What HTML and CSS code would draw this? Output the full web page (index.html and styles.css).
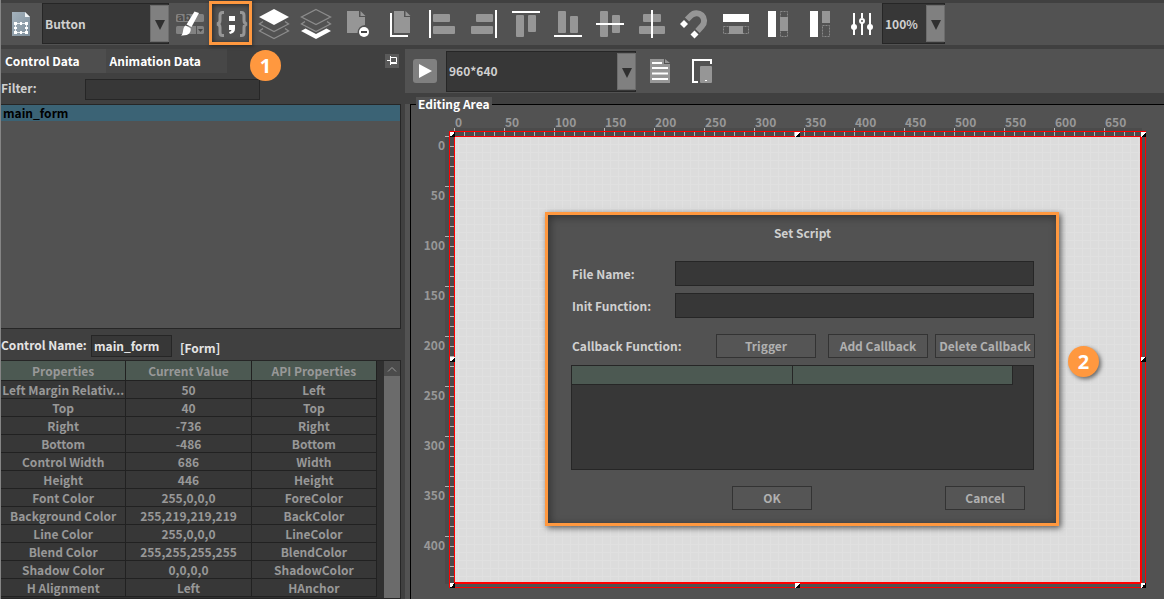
FILE: index.html
```html
<!DOCTYPE html>
<html lang="en">
<head>
<meta charset="utf-8">
<title>Form Designer</title>
<link rel="stylesheet" href="styles.css">
</head>
<body>
<div class="app">
  <header class="toolbar">
    <button class="tool" aria-label="New form"><svg viewBox="0 0 42 42"><defs><linearGradient id="pg" x1="0" y1="0" x2="1" y2="1"><stop offset="0" stop-color="#a4b2bc"/><stop offset="1" stop-color="#7d8e9b"/></linearGradient></defs><path d="M11 9h13l5 5v19H11z" fill="url(#pg)"/><path d="M24 9v5h5z" fill="#f2f5f7"/><path d="M14.500 20.500h11v9h-11z" fill="none" stroke="#e8edf0"/><path d="M13 19h3v3h-3zM24 19h3v3h-3zM13 28h3v3h-3zM24 28h3v3h-3zM19 19h2v3h-2zM19 28h2v3h-2zM13 24h3v2h-3zM24 24h3v2h-3z" fill="#fff"/></svg></button>
    <div class="combo combo-type"><select aria-label="Control type"><option>Button</option></select><span class="arrow"></span></div>
    <button class="tool" aria-label="Style"><svg viewBox="0 0 42 42"><rect x="7" y="11" width="28" height="8" rx="1.500" fill="#828282"/><rect x="7" y="23" width="28" height="8" rx="1.500" fill="#828282"/><path d="M27.500 23v8" stroke="#555"/><path d="M29 26h5l-2.500 3z" fill="#444"/><text class="ab" x="8" y="18">ab</text><path d="M25.500 8.500l4.500 1.500-7.500 14-5-2.500z" fill="#fff"/><path d="M16.500 22.500l5 2.500c1 4-1.500 8-9.500 7.500 3-1.500 1-8 4.500-10z" fill="#fff"/></svg></button>
    <button class="tool tool-marked" aria-label="Set script"><svg viewBox="0 0 42 42"><path d="M13 9.500h-1.500q-2.500 0-2.500 3v5q0 3-3 3.500q3 .5 3 3.500v5q0 3 2.500 3H13M29 9.500h1.500q2.500 0 2.500 3v5q0 3 3 3.500q-3 .5-3 3.500v5q0 3-2.500 3H29" fill="none" stroke="#969696" stroke-width="3"/><path d="M18 13h6v5h-6zM18 22h6v4q0 4-5 5l-1-2q2.500-.5 2.500-2H18z" fill="#fff"/></svg><span class="badge badge-one">1</span></button>
    <button class="tool" aria-label="Bring to front"><svg viewBox="0 0 42 42"><path d="M10 18.500l-3.500 2.500L21 28.500 35.500 21 32 18.500M10 25.500l-3.500 2.500L21 35.500 35.500 28 32 25.500" fill="none" stroke="#8c8c8c" stroke-width="1.300"/><path d="M21 6l15 8-15 8-15-8z" fill="#fff"/></svg></button>
    <button class="tool" aria-label="Send to back"><svg viewBox="0 0 42 42"><path d="M21 6.500L35.500 14 21 21.500 6.500 14zM10 18.500l-3.500 2.500L21 28.500 35.500 21 32 18.500" fill="none" stroke="#8c8c8c" stroke-width="1.300"/><path d="M10.500 25.500L21 31l10.500-5.500L36 28 21 36 6 28z" fill="#fff"/></svg></button>
    <button class="tool" aria-label="Remove form"><svg viewBox="0 0 42 42"><path d="M10 8h12v6h6v8q-7 .5-7.500 8H10z" fill="#969696"/><path d="M23.500 8l5 5h-5z" fill="#969696"/><circle cx="27" cy="29" r="5" fill="#fff"/><path d="M24 29h6" stroke="#444" stroke-width="2"/></svg></button>
    <button class="tool" aria-label="Copy form"><svg viewBox="0 0 42 42"><path d="M15 8h10v6h6v16H15z" fill="#969696"/><path d="M26.500 8l5 5h-5z" fill="#969696"/><path d="M12 10v23h17" fill="none" stroke="#fff" stroke-width="2"/></svg></button>
    <button class="tool" aria-label="Align left"><svg viewBox="0 0 42 42"><path d="M8 7h2v28H8z" fill="#fff"/><rect x="12" y="11" width="17" height="8" rx="1" fill="#969696"/><rect x="12" y="23" width="22" height="8" rx="1" fill="#969696"/></svg></button>
    <button class="tool" aria-label="Align right"><svg viewBox="0 0 42 42"><path d="M32 7h2v28h-2z" fill="#fff"/><rect x="13" y="11" width="17" height="8" rx="1" fill="#969696"/><rect x="8" y="23" width="22" height="8" rx="1" fill="#969696"/></svg></button>
    <button class="tool" aria-label="Align top"><svg viewBox="0 0 42 42"><path d="M7 8h28v2H7z" fill="#fff"/><rect x="11" y="12" width="8" height="22" rx="1" fill="#969696"/><rect x="23" y="12" width="8" height="17" rx="1" fill="#969696"/></svg></button>
    <button class="tool" aria-label="Align bottom"><svg viewBox="0 0 42 42"><path d="M7 32h28v2H7z" fill="#fff"/><rect x="11" y="8" width="8" height="22" rx="1" fill="#969696"/><rect x="23" y="13" width="8" height="17" rx="1" fill="#969696"/></svg></button>
    <button class="tool" aria-label="Align middle"><svg viewBox="0 0 42 42"><rect x="11" y="8" width="8" height="26" rx="1" fill="#969696"/><rect x="23" y="12" width="8" height="18" rx="1" fill="#969696"/><path d="M7 20h28v2H7z" fill="#fff"/></svg></button>
    <button class="tool" aria-label="Align center"><svg viewBox="0 0 42 42"><rect x="12" y="11" width="18" height="8" rx="1" fill="#969696"/><rect x="8" y="23" width="26" height="8" rx="1" fill="#969696"/><path d="M20 7h2v28h-2z" fill="#fff"/></svg></button>
    <button class="tool" aria-label="Snap"><svg viewBox="0 0 42 42"><path d="M14 16.500l4-4A7.500 7.500 0 0 1 29 23l-4.500 5" fill="none" stroke="#969696" stroke-width="6"/><path d="M11 17l4 4-4 4-4-4zM21.500 27.500l4 4-4 4-4-4z" fill="#fff"/></svg></button>
    <button class="tool" aria-label="Same width"><svg viewBox="0 0 42 42"><path d="M8 11h26v8H8z" fill="#fff"/><path d="M8.500 23.500h25v7h-25z" fill="none" stroke="#888" stroke-dasharray="2 1"/><path d="M14 23h14v8H14z" fill="#969696"/></svg></button>
    <button class="tool" aria-label="Same height"><svg viewBox="0 0 42 42"><path d="M11 8h8v26h-8z" fill="#fff"/><path d="M23.500 8.500h7v25h-7z" fill="none" stroke="#888" stroke-dasharray="2 1"/><path d="M23 14h8v14h-8z" fill="#969696"/></svg></button>
    <button class="tool" aria-label="Same size"><svg viewBox="0 0 42 42"><path d="M11 8h8v26h-8z" fill="#fff"/><path d="M23.500 22.500h7v11h-7z" fill="none" stroke="#888" stroke-dasharray="2 1"/><path d="M23 8h8v12h-8z" fill="#969696"/></svg></button>
    <button class="tool" aria-label="Settings"><svg viewBox="0 0 42 42"><path d="M13 10v22M21 10v5M21 20v12M29 10v22" stroke="#fff" stroke-width="2"/><circle cx="13" cy="24" r="3" fill="#fff"/><circle cx="29" cy="24" r="3" fill="#fff"/><circle cx="21" cy="18" r="2" fill="none" stroke="#fff" stroke-width="2"/></svg></button>
    <div class="combo combo-zoom"><select aria-label="Zoom"><option>100%</option></select><span class="arrow"></span></div>
  </header>

  <div class="columns">
    <aside class="side">
      <nav class="tabs">
        <button class="tab tab-active">Control Data</button>
        <button class="tab">Animation Data</button>
        <button class="pin" aria-label="Pin panel"><svg viewBox="0 0 14 14"><path d="M2 6.500h3M5.500 2v9M5.500 3.500h6v5h-6M6 9.500h6" fill="none" stroke="#fff"/></svg></button>
      </nav>
      <div class="filter"><label for="filter">Filter:</label><input id="filter" type="text"></div>
      <ul class="tree"><li>main_form</li></ul>
      <div class="name-row"><label for="cname">Control Name:</label><input id="cname" type="text" value="main_form"><span>[Form]</span></div>
      <div class="props">
        <table>
          <thead><tr><th>Properties</th><th>Current Value</th><th>API Properties</th></tr></thead>
          <tbody>
            <tr><td>Left Margin Relativ...</td><td>50</td><td>Left</td></tr>
            <tr><td>Top</td><td>40</td><td>Top</td></tr>
            <tr><td>Right</td><td>-736</td><td>Right</td></tr>
            <tr><td>Bottom</td><td>-486</td><td>Bottom</td></tr>
            <tr><td>Control Width</td><td>686</td><td>Width</td></tr>
            <tr><td>Height</td><td>446</td><td>Height</td></tr>
            <tr><td>Font Color</td><td>255,0,0,0</td><td>ForeColor</td></tr>
            <tr><td>Background Color</td><td>255,219,219,219</td><td>BackColor</td></tr>
            <tr><td>Line Color</td><td>255,0,0,0</td><td>LineColor</td></tr>
            <tr><td>Blend Color</td><td>255,255,255,255</td><td>BlendColor</td></tr>
            <tr><td>Shadow Color</td><td>0,0,0,0</td><td>ShadowColor</td></tr>
            <tr><td>H Alignment</td><td>Left</td><td>HAnchor</td></tr>
          </tbody>
        </table>
        <div class="scroll"><button aria-label="Scroll up"><svg viewBox="0 0 16 14"><path d="M4 10l4-4 4 4" fill="none" stroke="#999"/></svg></button></div>
      </div>
    </aside>

    <main class="work">
      <div class="preview-bar">
        <button class="play" aria-label="Run"><svg viewBox="0 0 24 24"><path d="M6 5l13 7-13 7z" fill="#fff"/></svg></button>
        <div class="combo combo-size"><select aria-label="Screen size"><option>960*640</option></select><span class="arrow"></span></div>
        <button class="view" aria-label="Log"><svg viewBox="0 0 20 24"><path d="M0 0h14v5h6v19H0z" fill="#969696"/><path d="M15 0l5 4h-5z" fill="#969696"/><path d="M2 4h10M2 9h16M2 14.500h16M2 20h16" stroke="#fff" stroke-width="2"/></svg></button>
        <button class="view" aria-label="Device"><svg viewBox="0 0 20 24"><path d="M6 23H1V1h18v4" fill="none" stroke="#fff" stroke-width="2"/><rect x="8" y="7" width="12" height="17" rx="1" fill="#969696"/><path d="M13 21.500h2" stroke="#fff"/></svg></button>
      </div>
      <fieldset class="editor">
        <legend>Editing Area</legend>
        <div class="board">
          <div class="ruler ruler-x"><span>0</span><span>50</span><span>100</span><span>150</span><span>200</span><span>250</span><span>300</span><span>350</span><span>400</span><span>450</span><span>500</span><span>550</span><span>600</span><span>650</span></div>
          <div class="ruler ruler-y"><span>0</span><span>50</span><span>100</span><span>150</span><span>200</span><span>250</span><span>300</span><span>350</span><span>400</span></div>
          <div class="stage">
            <div class="frame"><i class="t l"></i><i class="t c"></i><i class="t r"></i><i class="m l"></i><i class="m r"></i><i class="b l"></i><i class="b c"></i><i class="b r"></i></div>
            <form class="dialog">
              <h2>Set Script</h2>
              <div class="field"><label for="file">File Name:</label><input id="file" type="text"></div>
              <div class="field"><label for="init">Init Function:</label><input id="init" type="text"></div>
              <div class="callbacks"><span>Callback Function:</span><button type="button">Trigger</button><button type="button">Add Callback</button><button type="button">Delete Callback</button></div>
              <div class="cb-list"><div class="cb-head"></div><div class="cb-head"></div></div>
              <div class="actions"><button type="button">OK</button><button type="button">Cancel</button></div>
              <span class="badge badge-two">2</span>
            </form>
          </div>
        </div>
      </fieldset>
    </main>
  </div>
</div>
</body>
</html>
```
FILE: styles.css
```css
* { box-sizing: border-box; }
body { margin: 0; }
.app {
  display: flex;
  flex-direction: column;
  height: 100vh;
  overflow: hidden;
  padding-top: 3px;
  border-left: 1px solid #858585;
  background: #404040;
  color: #d0d0d0;
  font: 700 12px/18px "Noto Sans CJK SC", "Noto Sans", sans-serif;
}
button, input, select { font: inherit; color: inherit; margin: 0; padding: 0; border: 0; border-radius: 0; background: none; }
svg { display: block; width: 100%; height: 100%; }
input { background: #373737; border: 1px solid #262626; }

/* main toolbar */
.toolbar { display: flex; flex: none; height: 42px; background: #525252; }
.tool { width: 42px; height: 42px; flex: none; }
.toolbar > .tool:first-child { width: 41px; }
.toolbar > .tool:first-child svg { width: 42px; }
.tool-marked { position: relative; }
.tool-marked::after {
  content: "";
  position: absolute;
  inset: -2px 1px 0 -2px;
  border: 3px solid #ff983f;
  box-shadow: inset 1px 1px 5px #0008, 1px 1px 4px #0006;
}
.ab { font: 700 10px "DejaVu Sans", sans-serif; fill: #4b4b4b; }
.combo { display: flex; flex: none; position: relative; height: 41px; }
.combo select { appearance: none; width: 100%; height: 100%; padding: 0 22px 0 2px; background: #373737; border: 1px solid #262626; }
.combo .arrow {
  position: absolute;
  right: 0;
  top: 2px;
  bottom: 2px;
  width: 19px;
  background: #808080;
  border: 1px solid #6c6c6c;
  pointer-events: none;
}
.combo .arrow::after {
  content: "";
  position: absolute;
  left: 4px;
  top: 14px;
  border: 5px solid transparent;
  border-top: 10px solid #303030;
  border-bottom: 0;
}
.combo-type { width: 127px; }
.combo-zoom { width: 63px; margin-left: -1px; }
.combo-size { width: 190px; }

.badge {
  position: absolute;
  display: grid;
  place-items: center;
  width: 31px;
  height: 31px;
  border-radius: 50%;
  background: #ff983f;
  color: #fff;
  font: 700 20px/20px "Open Sans", sans-serif;
  z-index: 2;
}
.badge-one { left: 39px; top: 47px; }
.badge-two { right: -43px; top: 131px; box-shadow: 2px 2px 4px #0008; }

.columns { display: grid; grid-template-columns: 400px minmax(0, 1fr); column-gap: 4px; flex: 1; min-height: 0; padding-top: 4px; }

/* side panel */
.side { display: flex; flex-direction: column; min-height: 0; }
.tabs { display: flex; flex: none; height: 24px; color: #fff; }
.tab { padding: 0 26px 0 4px; text-align: left; background: #474747; }
.tab-active { background: #4e4e4e; }
.pin { width: 14px; height: 14px; margin: 5px 2px 0 auto; background: #5a5a5a; }
.filter { display: flex; flex: none; height: 31px; align-items: center; padding-bottom: 1px; }
.filter label { width: 84px; }
.filter input { width: 175px; height: 21px; margin-top: 2px; }
.tree { flex: none; height: 225px; margin: 0; padding: 0; list-style: none; background: #525252; border: 1px solid #262626; border-left: 0; }
.tree li { height: 16px; padding-left: 2px; line-height: 16px; background: #3b6375; color: #000; }
.name-row { display: flex; flex: none; height: 31px; align-items: center; color: #e4e4e4; white-space: nowrap; }
.name-row label { width: 90px; }
.name-row input { width: 81px; height: 22px; margin: 2px 8px 0 0; padding-left: 2px; }
.name-row span { padding-top: 6px; }
.props { display: flex; flex: 1; min-height: 0; overflow: hidden; background: #303030; border: 1px solid #262626; border-left: 0; color: #989898; }
.props table { width: 376px; table-layout: fixed; border-collapse: separate; border-spacing: 0; align-self: flex-start; background: #373737; }
.props th, .props td { height: 18px; padding: 0; border: solid #212121; border-width: 0 1px 1px 0; text-align: center; font-weight: 700; line-height: 17px; white-space: nowrap; }
.props th { height: 20px; background: #4c5952; }
.scroll { width: 16px; margin-left: auto; background: #6b6b6b; }
.scroll button { display: block; width: 16px; height: 15px; background: #4b4b4b; }

/* work area */
.work { display: flex; flex-direction: column; min-width: 0; }
.preview-bar { display: flex; flex: none; align-items: center; height: 44px; padding-left: 8px; background: #525252; }
.play { width: 24px; height: 24px; margin-right: 9px; border-radius: 3px; background: #808080; }
.view { width: 20px; height: 24px; margin: 0 8px 0 14px; }
.editor { flex: 1; min-width: 0; margin: 4px 0 0; padding: 0 0 0 5px; border: 0; background: #525252; position: relative; }
.editor legend { height: 14px; margin-left: 6px; padding: 0 2px; line-height: 14px; color: #fff; background: #525252; position: relative; z-index: 1; }
.editor::before { content: ""; position: absolute; inset: -7px 0 0 5px; border: solid #000; border-width: 1px 0 0 1px; }
.board { display: grid; grid-template: 25px 448px / 44px 688px; position: relative; }
.ruler { display: flex; color: #989898; }
.ruler-x {
  grid-column: 2;
  height: 25px;
  background:
    repeating-linear-gradient(90deg, #b4b4b4 0 1px, transparent 1px 50px) 0 17px / 100% 8px no-repeat,
    repeating-linear-gradient(90deg, #b4b4b4 0 1px, transparent 1px 10px) 0 21px / 100% 4px no-repeat,
    linear-gradient(#4b4b4b, #4b4b4b) 0 17px / 100% 8px no-repeat;
}
.ruler-x span { flex: 0 0 50px; padding: 2px 0 0 1px; }
.ruler-y {
  flex-direction: column;
  background:
    repeating-linear-gradient(#b4b4b4 0 1px, transparent 1px 50px) 35px 0 / 9px 100% no-repeat,
    repeating-linear-gradient(#b4b4b4 0 1px, transparent 1px 10px) 40px 0 / 4px 100% no-repeat,
    linear-gradient(#4b4b4b, #4b4b4b) 35px 0 / 9px 100% no-repeat;
}
.ruler-y span { flex: 0 0 50px; padding-right: 9px; text-align: right; }
.ruler-y span:last-child { flex-basis: 48px; }
.stage {
  position: relative;
  border: 1px solid #f00;
  border-width: 1px 2px 2px 1px;
  background-color: #dcdcdc;
  background-image: linear-gradient(90deg, #e0e0e0 1px, transparent 1px), linear-gradient(#e0e0e0 1px, transparent 1px);
  background-size: 8px 8px;
  background-position: 3px 7px;
}
.frame { position: absolute; inset: -6px; border: 1px solid #f00; }
.frame i { position: absolute; width: 5px; height: 5px; background: linear-gradient(135deg, #fff 50%, #000 50%); }
.frame .t { top: 0; }
.frame .m { top: calc(50% - 3px); }
.frame .b { bottom: -1px; }
.frame .l { left: 0; }
.frame .c { left: calc(50% - 3px); }
.frame .r { right: -1px; }

/* script dialog */
.dialog {
  position: absolute;
  left: 90px;
  top: 75px;
  width: 514px;
  padding: 0 22px 13px 23px;
  border: 3px solid #ff983f;
  background: #525252;
  box-shadow: 2px 2px 6px #0009, inset 2px 2px 8px #0006;
}
.dialog h2 { margin: 0; height: 46px; font: inherit; line-height: 35px; text-align: center; }
.field { display: grid; grid-template-columns: 104px 1fr; align-items: center; height: 25px; margin-bottom: 7px; }
.field label, .callbacks span { padding-left: 1px; }
.field input { height: 25px; width: 100%; }
.callbacks { display: flex; align-items: center; height: 24px; margin: 16px -1px 7px 0; }
.callbacks span { flex: 1; }
.callbacks button, .actions button { width: 100px; height: 24px; border: 1px solid #333; background: #555; color: #b0b0b0; white-space: nowrap; }
.callbacks button + button { margin-left: 12px; }
.callbacks button:last-child { margin-left: 7px; }
.cb-list { display: flex; height: 105px; padding-right: 20px; border: 1px solid #262626; background: #373737; }
.cb-head { flex: 1; height: 19px; border: solid #262626; border-width: 0 1px 1px 0; background: #4c5952; }
.actions { display: flex; justify-content: space-between; padding: 16px 9px 0 161px; }
.actions button { width: 80px; }
```
